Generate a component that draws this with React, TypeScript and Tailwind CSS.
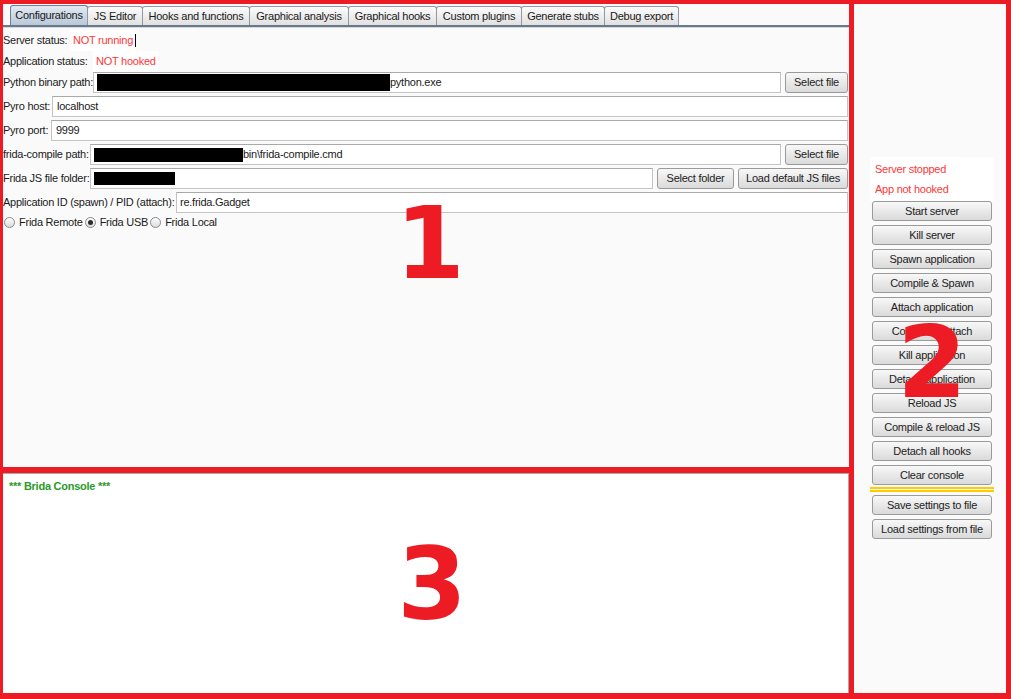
import React from 'react';

const tabs = [
  { label: 'Configurations', w: 'w-[78px]', active: true },
  { label: 'JS Editor', w: 'w-[56px]' },
  { label: 'Hooks and functions', w: 'w-[108px]' },
  { label: 'Graphical analysis', w: 'w-[100px]' },
  { label: 'Graphical hooks', w: 'w-[89px]' },
  { label: 'Custom plugins', w: 'w-[86px]' },
  { label: 'Generate stubs', w: 'w-[84px]' },
  { label: 'Debug export', w: 'w-[75px]' },
];

const sideButtons = [
  'Start server',
  'Kill server',
  'Spawn application',
  'Compile & Spawn',
  'Attach application',
  'Compile & Attach',
  'Kill application',
  'Detach application',
  'Reload JS',
  'Compile & reload JS',
  'Detach all hooks',
  'Clear console',
];

function Btn({ children, className = '' }: { children: React.ReactNode; className?: string }) {
  return (
    <div
      className={`flex items-center justify-center whitespace-nowrap rounded-[3px] border border-[#9a9a9a] bg-linear-to-b from-[#f8f8f8] to-[#dadada] text-[#222] ${className}`}
    >
      {children}
    </div>
  );
}

function Field({ children, className = '' }: { children?: React.ReactNode; className?: string }) {
  return (
    <div
      className={`flex h-full min-w-0 flex-1 items-center whitespace-nowrap border border-[#c4c4c4] border-t-[#a9a9a9] bg-white pl-[3px] ${className}`}
    >
      {children}
    </div>
  );
}

function Radio({ label, checked = false }: { label: string; checked?: boolean }) {
  return (
    <div className="flex items-center gap-[4px]">
      <span className="flex h-[11px] w-[11px] items-center justify-center rounded-full border border-[#8a8a8a] bg-linear-to-b from-white to-[#dcdcdc]">
        {checked && <span className="h-[5px] w-[5px] rounded-full bg-[#2b2b2b]" />}
      </span>
      <span>{label}</span>
    </div>
  );
}

export default function App() {
  return (
    <div className="relative flex h-[699px] w-[1011px] overflow-hidden bg-white font-['Liberation_Sans',Arial,sans-serif] text-[11px] tracking-[-0.25px] text-[#1a1a1a]">
      {/* left column: tabs panel + console */}
      <div className="flex w-[854px] flex-col">
        {/* 1: configuration tab */}
        <div className="flex h-[473px] flex-col border-t-4 border-r-[5px] border-b-[6px] border-l-[3px] border-[#ed1c24] bg-[#fafafa]">
          <div className="flex h-[21px] items-end pt-[1px] pl-[7px]">
            {tabs.map((t, i) => (
              <div
                key={t.label}
                className={`flex items-center justify-center rounded-t-[3px] border border-b-0 ${t.w} ${
                  i > 0 ? '-ml-px' : ''
                } ${
                  t.active
                    ? 'h-[20px] border-[#6f7e90] bg-linear-to-b from-[#e2eaf2] to-[#b9c8d9]'
                    : 'h-[19px] border-[#9099a3] bg-linear-to-b from-[#fcfcfc] to-[#e1e1e1]'
                }`}
              >
                {t.label}
              </div>
            ))}
          </div>
          <div className="h-[2px] bg-[#6a7888]" />
          <div className="h-px bg-[#d3d9e0]" />

          <div className="mt-[2px] flex flex-col pr-[1px]">
            <div className="flex h-[21px] items-center whitespace-nowrap">
              <span className="w-[67px]">Server status:</span>
              <span className="flex h-full w-[64px] items-center bg-white pl-[3px] text-[#ff3636]">
                NOT running
                <span className="ml-[2px] h-[13px] w-px shrink-0 bg-black" />
              </span>
            </div>
            <div className="flex h-[21px] items-center whitespace-nowrap">
              <span className="w-[90px]">Application status:</span>
              <span className="flex h-full w-[65px] items-center bg-white pl-[3px] text-[#ff3636]">
                NOT hooked
              </span>
            </div>

            <div className="flex h-[21px] items-center">
              <span className="w-[90px] whitespace-nowrap">Python binary path:</span>
              <Field>
                <span className="h-[17px] w-[293px] bg-black" />
                <span>python.exe</span>
              </Field>
              <Btn className="ml-[4px] h-full w-[63px]">Select file</Btn>
            </div>

            <div className="mt-[3px] flex h-[21px] items-center">
              <span className="w-[49px]">Pyro host:</span>
              <Field className="pl-[4px]">localhost</Field>
            </div>

            <div className="mt-[3px] flex h-[21px] items-center">
              <span className="w-[48px]">Pyro port:</span>
              <Field className="pl-[4px]">9999</Field>
            </div>

            <div className="mt-[3px] flex h-[21px] items-center">
              <span className="w-[87px] whitespace-nowrap">frida-compile path:</span>
              <Field>
                <span className="h-[14px] w-[149px] bg-black" />
                <span>bin\frida-compile.cmd</span>
              </Field>
              <Btn className="ml-[4px] h-full w-[63px]">Select file</Btn>
            </div>

            <div className="mt-[3px] flex h-[21px] items-center">
              <span className="w-[87px] whitespace-nowrap">Frida JS file folder:</span>
              <Field>
                <span className="h-[13px] w-[81px] bg-black" />
              </Field>
              <Btn className="ml-[4px] h-full w-[77px]">Select folder</Btn>
              <Btn className="ml-[4px] h-full w-[110px]">Load default JS files</Btn>
            </div>

            <div className="mt-[3px] flex h-[21px] items-center">
              <span className="w-[173px] whitespace-nowrap">Application ID (spawn) / PID (attach):</span>
              <Field>re.frida.Gadget</Field>
            </div>

            <div className="mt-px flex h-[17px] items-center gap-[2px] pl-px">
              <Radio label="Frida Remote" />
              <Radio label="Frida USB" checked />
              <Radio label="Frida Local" />
            </div>
          </div>
        </div>

        {/* 3: console */}
        <div className="flex-1 border-r-[5px] border-b-[6px] border-l-[3px] border-[#ed1c24] bg-white">
          <div className="h-full border-t border-r border-[#a9a9a9] pt-[4px] pl-[6px]">
            <span className="font-bold text-[#2a9a2a]">*** Brida Console ***</span>
          </div>
        </div>
      </div>

      {/* 2: control buttons */}
      <div className="w-[157px] border-t-4 border-r-[5px] border-b-[6px] border-[#ed1c24] bg-[#fafafa] pt-[153px] pl-[16px]">
        <div className="w-[124px] whitespace-nowrap bg-white pt-[2px] pb-[2px] text-[#ff3636]">
          <div className="flex h-[20px] items-center pl-[5px]">Server stopped</div>
          <div className="flex h-[20px] items-center pl-[5px]">App not hooked</div>
        </div>
        <div className="flex w-[124px] flex-col">
          <div className="flex flex-col gap-[4px] pl-[2px]">
            {sideButtons.map((b) => (
              <Btn key={b} className="h-[20px] w-[120px]">
                {b}
              </Btn>
            ))}
          </div>
          <div className="mt-[2px] h-[2px] bg-[#ffcc00]" />
          <div className="mt-px h-[2px] bg-[#ffcc00]" />
          <div className="mt-[3px] flex flex-col gap-[4px] pl-[2px]">
            <Btn className="h-[20px] w-[120px]">Save settings to file</Btn>
            <Btn className="h-[20px] w-[120px]">Load settings from file</Btn>
          </div>
        </div>
      </div>

      {/* region numbers painted over the screenshot */}
      <div className="absolute top-[194px] left-[380px] w-[100px] text-center font-['DejaVu_Sans',sans-serif] text-[100px] leading-none font-bold tracking-normal text-[#ed1c24]">
        1
      </div>
      <div className="absolute top-[313px] left-[882px] w-[100px] text-center font-['DejaVu_Sans',sans-serif] text-[100px] leading-none font-bold tracking-normal text-[#ed1c24]">
        2
      </div>
      <div className="absolute top-[535px] left-[382px] w-[100px] text-center font-['DejaVu_Sans',sans-serif] text-[100px] leading-none font-bold tracking-normal text-[#ed1c24]">
        3
      </div>
    </div>
  );
}
